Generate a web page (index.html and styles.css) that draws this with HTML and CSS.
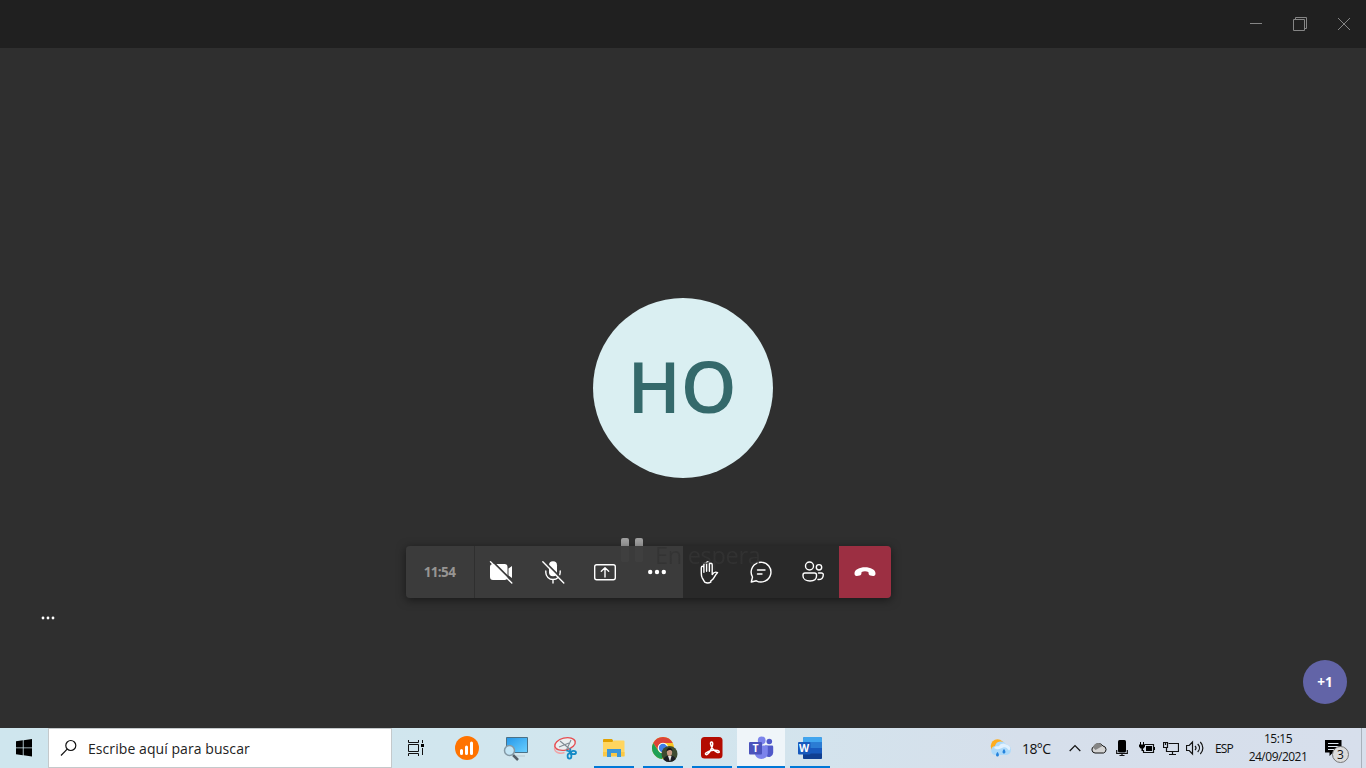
FILE: index.html
```html
<!DOCTYPE html>
<html lang="es">
<head>
<meta charset="utf-8">
<title>Reunión</title>
<link rel="stylesheet" href="styles.css">
</head>
<body>
<div class="screen">
  <header class="titlebar">
    <svg class="winbtn" viewBox="0 0 44 48"><path d="M16 23.5h12"/></svg>
    <svg class="winbtn" viewBox="0 0 44 48"><path d="M15.500 19.500h11v11h-11zM17.500 19v-1.500h11v11h-1.500"/></svg>
    <svg class="winbtn" viewBox="0 0 44 48"><path d="M16 18l12 12M28 18l-12 12"/></svg>
  </header>

  <main class="stage">
    <div class="avatar"><span>HO</span></div>
    <span class="bars"><i></i><i></i></span>
    <div class="toolbar">
      <div class="time">11:54</div>
      <div class="group">
        <svg class="tool" viewBox="0 0 52 52"><path fill="#fff" d="M18 18h11.500a3 3 0 0 1 3 3v10a3 3 0 0 1-3 3H18a3 3 0 0 1-3-3V21a3 3 0 0 1 3-3zM33.500 22.500l3.500-2.500v12l-3.500-2.500z"/><path class="cut" d="M17 14.800L38.200 36"/><path class="ln" d="M15.500 15.800L36.800 37"/></svg>
        <svg class="tool" viewBox="0 0 52 52"><rect x="22" y="15.300" width="8" height="15" rx="4" fill="#fff"/><path class="ln" d="M18.800 25v1.500a7.200 7 0 0 0 14.400 0V25M26 33.500V37"/><path class="cut" d="M17 15L38 36"/><path class="ln" d="M15.800 15.800L36.800 37"/></svg>
        <svg class="tool" viewBox="0 0 52 52"><rect class="ln" x="15.700" y="18.700" width="20.600" height="15" rx="2"/><path class="ln" d="M26 31v-9M22.300 25.200L26 21.700l3.700 3.500"/></svg>
        <svg class="tool" viewBox="0 0 52 52"><g fill="#fff"><circle cx="19.200" cy="26" r="2.200"/><circle cx="26" cy="26" r="2.200"/><circle cx="32.800" cy="26" r="2.200"/></g></svg>
      </div>
      <div class="group dark">
        <svg class="tool" viewBox="0 0 52 52"><path class="ln" d="M21.700 36.200l-2.500-4.400c-.8-1.600-.9-3-.9-4.800v-5.300c0-2 2.600-2 2.600 0v4.500-7.500c0-2.100 2.700-2.100 2.700 0v6.500-7.900c0-2 2.800-2 2.800 0v7.900-6.500c0-2 2.800-2 2.800 0v9.800c1.300-2 3.300-2.900 5.400-1.900-1.500 1.600-2.500 3-3.600 5-1.100 1.900-2.200 2.500-3.200 3.300v1.300c-1.600.8-4.500.8-6.100 0z"/></svg>
        <svg class="tool" viewBox="0 0 52 52"><path class="ln" d="M26 16.200a9.900 9.900 0 1 1-4.700 18.600l-5 1.200 1.200-5A9.900 9.900 0 0 1 26 16.200zM22.500 24h7.500M22.500 28h4.500"/></svg>
        <svg class="tool" viewBox="0 0 52 52"><circle class="ln" cx="22.500" cy="20" r="4"/><circle class="ln" cx="32" cy="21.300" r="2.700"/><path class="ln" d="M18 27h9.500a2 2 0 0 1 2 2v1c0 3.400-3 5-6.500 5s-7-1.600-7-5v-1a2 2 0 0 1 2-2zM31.500 27H34.500a1.800 1.800 0 0 1 1.800 1.800c0 3-1.800 5-5.300 4.700"/></svg>
      </div>
      <svg class="tool hang" viewBox="0 0 52 52"><path fill="#fff" d="M26 21.300c5.500 0 10.500 2.300 10.500 6.200 0 1.700-.8 2.700-2.400 2.500l-2.700-.4c-1.200-.2-1.700-.9-1.800-2l-.2-1.700c-2-.8-4.800-.8-6.800 0l-.2 1.700c-.1 1.100-.6 1.800-1.800 2l-2.700.4c-1.600.2-2.400-.8-2.400-2.500 0-3.900 5-6.200 10.500-6.200z"/></svg>
    </div>
    <span class="hold-text">En espera</span>
    <svg class="more" viewBox="0 0 14 4"><circle cx="2" cy="2" r="1.400"/><circle cx="7" cy="2" r="1.400"/><circle cx="12" cy="2" r="1.400"/></svg>
    <div class="plus">+1</div>
  </main>

  <footer class="taskbar">
    <svg class="start" viewBox="0 0 48 40"><path d="M16 13.300l6.800-1v7.100H16zM23.600 12.200L32 11v8.400h-8.400zM16 20.200h6.800v7.100l-6.800-1zM23.600 20.200H32V28.500l-8.400-1.200z"/></svg>
    <div class="search">
      <svg viewBox="0 0 18 18"><circle cx="10.800" cy="6.500" r="5"/><path d="M7.200 10.200L1 16.500"/></svg>
      <span>Escribe aquí para buscar</span>
    </div>
    <svg class="taskview" viewBox="0 0 48 40"><path fill="none" stroke="#111" d="M16.500 12v2.500h10V12M16.500 16.500h10v7h-10zM16.500 28v-2.500h10V28M30.500 12v3M30.500 20v7"/><path d="M29 16h3v3h-3z"/></svg>
    <nav class="apps">
      <div class="app"><svg viewBox="0 0 48 40"><circle cx="24" cy="20" r="12" fill="#ff7300"/><g stroke="#fff" stroke-width="3" stroke-linecap="round"><path d="M18.500 22.500v3M23.500 19v6.500M28.500 15v10.500" /></g></svg></div>
      <div class="app"><svg viewBox="0 0 48 40"><defs><linearGradient id="scr" x2="1" y2="1"><stop stop-color="#2497e9"/><stop offset="1" stop-color="#6bd0ff"/></linearGradient></defs><path d="M14.500 9.500h21v15h-21z" fill="url(#scr)" stroke="#4b7187"/><path d="M24 28h9" stroke="#b9c8cf"/><path d="M21 27l5 5" stroke="#555f68" stroke-width="2.500"/><circle cx="17.500" cy="22.500" r="5" fill="#c3e5f5" stroke="#8499a5" stroke-width="1.500"/></svg></div>
      <div class="app"><svg viewBox="0 0 48 40"><g fill="none"><ellipse cx="24" cy="16" rx="10.500" ry="6" fill="#e9eff1" stroke="#e64c50" stroke-width="1.400" transform="rotate(-14 24 16)"/><path d="M13.500 20c0 5 6 6 10 4.500" stroke="#f1a4a7" stroke-width="1.500"/><path d="M19 13l11 9M30 12l-5 11M18 19l10-4" stroke="#818c95" stroke-width="1.100"/><ellipse cx="28.500" cy="28" rx="1.900" ry="2.600" stroke="#138ac6" stroke-width="1.800"/><ellipse cx="32.500" cy="24.500" rx="2.500" ry="1.700" stroke="#138ac6" stroke-width="1.800"/><path d="M25.500 22.500l5 1.500M29.500 20.500l-1 5" stroke="#138ac6" stroke-width="1.500"/></g></svg></div>
      <div class="app run"><svg viewBox="0 0 48 40"><path fill="#e2a100" d="M13 12a1 1 0 0 1 1-1h8l2 3-2 3h-9z"/><path fill="#ffd55f" d="M13 14h9l2-1.500h9.500a1 1 0 0 1 1 1V28H13z"/><path fill="#fbc844" d="M13 24h21.500v4.500H13z"/><path fill="#3b96d8" d="M17 21h14v8h-4v-4h-6v4h-4z"/></svg></div>
      <div class="app run"><svg viewBox="0 0 48 40"><circle cx="24" cy="20" r="11" fill="#f9c623"/><path fill="#dc4438" d="M14.200 15A11 11 0 0 1 33.800 15H24a5 5 0 0 0-4.500 7.500z"/><path fill="#1d9f55" d="M14.200 15l5.300 8A5 5 0 0 0 26 24.500L23 31A11 11 0 0 1 14.200 15z"/><circle cx="24" cy="20" r="5.300" fill="#fff"/><circle cx="24" cy="20" r="4.200" fill="#3f7fe8"/><circle cx="30.500" cy="26" r="8" fill="#3e4b31"/><path fill="#1b1d24" d="M24.500 31.500c1-3 3-4 6-4s5.500 1 6.200 3.500a8 8 0 0 1-12.200.5z"/><path fill="#e6e6e6" d="M29 28h3.500l-1.500 5.500z"/><ellipse cx="30.500" cy="24.500" rx="2.600" ry="3.600" fill="#c79a83"/><path fill="#17171a" d="M27.500 23.500c0-5 6-5 6 0-1-2-4-2-6 0z"/></svg></div>
      <div class="app run"><svg viewBox="0 0 48 40"><rect x="13" y="9" width="21.500" height="21.500" rx="3.500" fill="#b30b00"/><path d="M23.300 14c2.600-.4 1.100 5.300-.8 8.500-1.900 3.300-4.300 5-5 3.700-.8-1.600 4.200-3.400 7.700-3.900 3.500-.4 6.400.2 6.100 1.700-.5 1.600-4.300-.4-6.600-3.200-1.800-2.300-3.100-6.500-1.400-6.800z" fill="none" stroke="#fff" stroke-width="1.500"/></svg></div>
      <div class="app run active"><svg viewBox="0 0 48 40"><circle cx="32.300" cy="13.500" r="2.800" fill="#5059c9"/><path fill="#5059c9" d="M28 17.500h7a1.200 1.200 0 0 1 1.200 1.200v6a4.500 4.500 0 0 1-7 3.500z"/><circle cx="24.700" cy="12.500" r="3.900" fill="#7b83eb"/><path fill="#7b83eb" d="M18 17.500h11.500a1.300 1.300 0 0 1 1.300 1.300v6c0 4-3 6.200-6.500 6.200s-6.500-2.500-6.500-6.200z"/><rect x="12" y="14" width="13" height="12.500" rx="1" fill="#4b53bc"/><text x="18.500" y="23.800" class="letter">T</text></svg></div>
      <div class="app run"><svg viewBox="0 0 48 40"><rect x="17" y="9" width="19" height="22" rx="1.500" fill="#185abd"/><path fill="#41a5ee" d="M17 14.500v-4A1.500 1.500 0 0 1 18.500 9h16a1.500 1.500 0 0 1 1.500 1.500v4z"/><path fill="#2b7cd3" d="M17 14.500h19V20H17z"/><path fill="#103f91" d="M17 25.500h19v4a1.500 1.500 0 0 1-1.500 1.500h-16a1.500 1.500 0 0 1-1.500-1.500z"/><rect x="12" y="14" width="12.500" height="12.500" rx="1" fill="#185abd"/><text x="18.200" y="23.800" class="letter">W</text></svg></div>
    </nav>
    <div class="tray">
      <svg class="w22" viewBox="0 0 22 20"><circle cx="7.500" cy="8" r="6.800" fill="#ffad1f"/><path fill="#acd9fa" d="M5.500 17a4.600 4.600 0 0 1-.5-9.100A6 6 0 0 1 16 6.500a5.300 5.300 0 0 1 .5 10.500z"/><path fill="#e1f1fe" d="M4 10c2-3 4-1 5-2 2-3 5-3 7-1.500 5 1 5 5 3 6-2-3-4-4-6-3s-5 3-9 .5z"/><path fill="#2683dc" d="M7.500 14c2.200 2.300 1.700 4.500 0 4.500s-2.200-2.200 0-4.500zM14 11c2.200 2.300 1.700 4.500 0 4.500s-2.200-2.200 0-4.500z"/></svg>
      <span class="temp">18°C</span>
      <svg class="chev" viewBox="0 0 12 20"><path class="k" d="M.7 13L6 7.500l5.300 5.500"/></svg>
      <svg class="cloud" viewBox="0 0 16 20"><path d="M4 15a3.400 3.400 0 0 1-.8-6.600A5 5 0 0 1 12 8a3.600 3.600 0 0 1 .5 7z" fill="#d3d3d3" stroke="#111"/><path d="M2 9.500A5 5 0 0 1 11.500 8L4.500 12z" fill="#858585"/></svg>
      <svg class="mic" viewBox="0 0 12 20"><rect x="2" y="2" width="8" height="12.500" rx="1.500"/><path class="k" d="M.7 12v3.500h10.600V12M6 15v2.500M3.500 17.500h5"/></svg>
      <svg class="bat" viewBox="0 0 16 20"><path class="k" d="M5.500 6.500h9v8H4.500V12"/><path d="M7 8h6v5H7zM15 9h1v3h-1zM1 4h1v3H1zM4 4h1v3H4zM0 6.500h6V8.500L4.500 10.500H4V13H2.500v-2.500H1.500L0 8.500z"/></svg>
      <svg class="net" viewBox="0 0 16 20"><path class="k" d="M5.500 5.500h10v8H3.500V10M9.500 13.500v3M6 16.500h7M.5 4.500h4v5h-4zM2.500 4v3"/></svg>
      <svg class="vol" viewBox="0 0 18 20"><path class="k" d="M.5 7.500h2.700L6.500 4v12l-3.300-3.500H.5zM9 8c1.200 1.200 1.200 2.800 0 4M11.700 6c2.300 2.300 2.300 5.700 0 8M14.300 4c3.400 3.400 3.400 8.600 0 12"/></svg>
      <span class="lang">ESP</span>
      <div class="clock"><span>15:15</span><span class="date">24/09/2021</span></div>
      <div class="notif"><svg viewBox="0 0 17 17"><path d="M0 0h16.500v12.500H8L4.500 16v-3.500H0z"/><path d="M3 3.500h10.500M3 6.500h10.500M3 9.500h6" stroke="#dfe6ee"/></svg><b>3</b></div>
      <i class="edge"></i>
    </div>
  </footer>
</div>
</body>
</html>
```
FILE: styles.css
```css
body { margin: 0; overflow: hidden; font-family: "Open Sans", "Noto Sans", sans-serif; }
.screen { width: 1366px; height: 768px; display: flex; flex-direction: column; background: #2f2f2f; }
svg { display: block; flex: none; }

.titlebar { height: 48px; background: #202020; display: flex; justify-content: flex-end; }
.winbtn { width: 44px; height: 48px; fill: none; stroke: #858585; stroke-width: 1; }

.stage { position: relative; flex: 1; display: flex; align-items: center; justify-content: center; }
.avatar { box-sizing: border-box; width: 180px; height: 180px; padding: 0 2px 5px 0; border-radius: 50%; background: #daeff2; color: #34696b; display: flex; align-items: center; justify-content: center; font-size: 71px; font-weight: 600; line-height: 1; }
.bars { position: absolute; left: 621px; top: 490px; display: flex; gap: 6px; }
.bars i { width: 8px; height: 24px; border-radius: 2px; background: #a0a0a0; }
.hold-text { position: absolute; left: 655px; top: 490px; font-size: 23.500px; line-height: 34px; letter-spacing: -.3px; white-space: nowrap; color: transparent; background: linear-gradient(#151515 8px, rgba(51,51,51,.85) 8px); background-clip: text; -webkit-background-clip: text; }
.toolbar { position: absolute; left: 406px; top: 498px; display: flex; height: 52px; border-radius: 4px; overflow: hidden; box-shadow: 0 2px 10px rgba(0,0,0,.5); }
.time { width: 68px; padding-right: 1px; box-sizing: border-box; border-right: 0; margin-right: 1px; background: rgba(59,59,59,.96); color: #979593; font-size: 13.5px; font-weight: 700; letter-spacing: -.6px; display: flex; align-items: center; justify-content: center; }
.group { display: flex; background: rgba(59,59,59,.96); }
.group.dark { background: rgba(41,41,41,.94); }
.tool { width: 52px; height: 52px; }
.hang { background: #9c2f42; }
.ln { fill: none; stroke: #fff; stroke-width: 1.4; stroke-linecap: round; stroke-linejoin: round; }
.cut { fill: none; stroke: #3b3b3b; stroke-width: 1.8; }
.more { position: absolute; left: 41px; top: 568px; width: 14px; height: 4px; fill: #fff; }
.plus { position: absolute; left: 1303px; top: 612px; width: 44px; height: 44px; border-radius: 50%; background: #6264a7; color: #fff; font-size: 13.5px; font-weight: 700; display: flex; align-items: center; justify-content: center; }

.taskbar { height: 40px; display: flex; background: linear-gradient(90deg, #cfe6ee, #d2e6ee 50%, #d6dfeb 75%, #d7dfec); color: #111; }
.start, .taskview { width: 48px; height: 40px; }
.search { box-sizing: border-box; width: 344px; border: 1px solid #c4c9cb; background: #fff; display: flex; align-items: center; gap: 10px; padding-left: 11px; font-size: 14px; letter-spacing: .07px; color: #222; }
.search svg { width: 18px; height: 18px; fill: none; stroke: #111; stroke-width: 1.2; }
.apps { display: flex; gap: 1px; margin-left: 3px; }
.app { position: relative; width: 48px; height: 40px; }
.app svg { width: 48px; height: 40px; }
.app.run::after { content: ""; position: absolute; left: 4px; right: 4px; bottom: 0; height: 2px; background: #0078d7; }
.app.active { background: #eff5f9; }
.app.active::after { left: 0; right: 0; }
.letter { font: 700 10.5px "Open Sans", sans-serif; fill: #fff; text-anchor: middle; }

.tray { flex: 1; display: flex; align-items: center; justify-content: flex-end; }
.tray svg { height: 20px; }
.k { fill: none; stroke: #111; stroke-width: 1.2; }
.tray .w22 { width: 22px; }
.temp { width: 48px; padding-left: 10px; box-sizing: border-box; font-size: 14px; letter-spacing: -.6px; margin-right: 9px; }
.chev { width: 12px; margin-right: 10px; }
.cloud { width: 16px; margin-right: 9px; }
.mic { width: 12px; margin-right: 11px; }
.bat { width: 16px; margin-right: 8px; }
.net { width: 16px; margin-right: 7px; }
.vol { width: 18px; margin-right: 11px; }
.lang { width: 19px; font-size: 12px; letter-spacing: -.9px; }
.clock { width: 88px; display: flex; flex-direction: column; align-items: center; font-size: 12px; line-height: 18px; letter-spacing: -.5px; }
.notif { position: relative; width: 39px; height: 40px; padding-left: 3px; box-sizing: border-box; }
.notif svg { width: 17px; height: 17px; margin-top: 12px; }
.notif b { position: absolute; left: 10px; top: 18px; width: 15px; height: 15px; border: 1px solid #777; border-radius: 50%; background: #dcdcdc; font-size: 12px; font-weight: 400; line-height: 15px; text-align: center; }
.edge { width: 4px; height: 40px; border-left: 1px solid #a9b1bb; }
```
